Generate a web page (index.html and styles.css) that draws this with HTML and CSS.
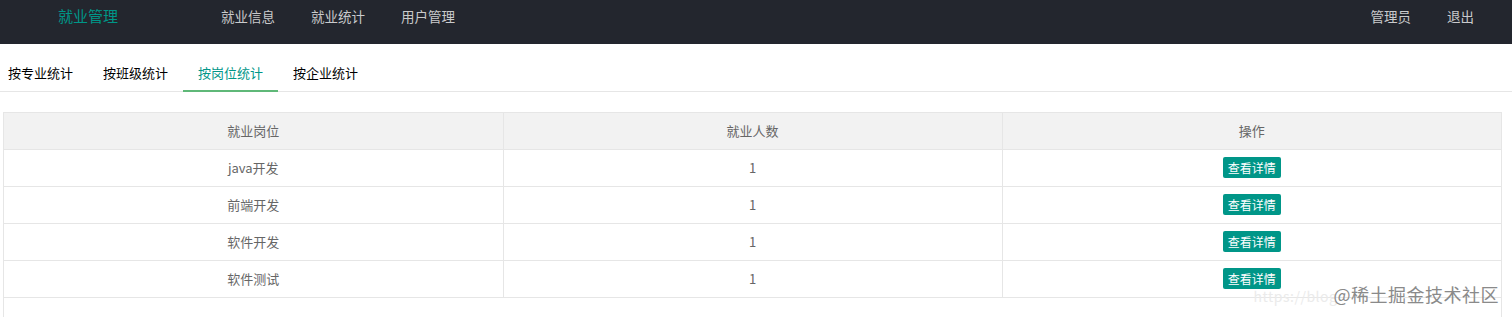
FILE: index.html
```html
<!DOCTYPE html>
<html>
<head>
<meta charset="utf-8">
<title>就业管理</title>
<link rel="stylesheet" href="styles.css">
</head>
<body>
<div class="header">
  <div class="logo">就业管理</div>
  <ul class="nav">
    <li>就业信息</li>
    <li>就业统计</li>
    <li>用户管理</li>
  </ul>
  <ul class="nav nav-right">
    <li>管理员</li>
    <li>退出</li>
  </ul>
</div>

<ul class="tab-title">
  <li>按专业统计</li>
  <li>按班级统计</li>
  <li class="this">按岗位统计</li>
  <li>按企业统计</li>
</ul>

<div class="tbl">
  <table>
    <tr><th>就业岗位</th><th>就业人数</th><th>操作</th></tr>
    <tr><td>java开发</td><td>1</td><td><span class="btn">查看详情</span></td></tr>
    <tr><td>前端开发</td><td>1</td><td><span class="btn">查看详情</span></td></tr>
    <tr><td>软件开发</td><td>1</td><td><span class="btn">查看详情</span></td></tr>
    <tr><td>软件测试</td><td>1</td><td><span class="btn">查看详情</span></td></tr>
  </table>
  <div class="mark"><span class="url">https://blog</span>@稀土掘金技术社区</div>
</div>
</body>
</html>
```
FILE: styles.css
```css
*{ padding:0; margin:0; list-style:none; border:0; box-sizing:border-box;}
body{ font-family:"Noto Sans CJK SC", "Noto Sans", sans-serif; font-size:13px; color:#333; background:#fff; overflow:hidden;}

.header{ height:44px; background:#23262e; display:flex; align-items:flex-start;}
.header .logo{ color:#009688; font-size:15px; line-height:32px; margin-left:58px; width:145px;}
.header .nav{ display:flex;}
.header .nav li{ color:#c9cacc; font-size:13.5px; line-height:32px; padding:0 18px; cursor:pointer;}
.header .nav-right{ margin-left:auto; margin-right:20px;}
.header .nav-right li{ padding:0 18px;}

.tab-title{ display:flex; margin-top:8px; height:40px; border-bottom:1px solid #e6e6e6;}
.tab-title li{ width:95px; text-align:center; line-height:41px; font-size:13px; color:#000; position:relative; cursor:pointer;}
.tab-title li:first-child{ width:88px; text-align:left; padding-left:8px;}
.tab-title .this{ color:#009688;}
.tab-title .this:after{ content:""; position:absolute; left:0; right:0; bottom:-1px; height:2px; background:#5fb878;}

.tbl{ margin:20px 10px 0 3px; height:205px; border:1px solid #e6e6e6; border-bottom:0; position:relative;}
.tbl table{ width:100%; border-collapse:collapse; table-layout:fixed;}
.tbl th, .tbl td{ height:37px; text-align:center; font-weight:normal; color:#666; font-size:13px; border-right:1px solid #e6e6e6; border-bottom:1px solid #e6e6e6;}
.tbl th:last-child, .tbl td:last-child{ border-right:0;}
.tbl th{ height:36px; background:#f2f2f2;}
.tbl .btn{ display:inline-block; height:21px; line-height:21px; padding:0 5px; background:#009688; color:#fff; font-size:12px; border-radius:2px;}

.mark{ position:absolute; right:2px; top:168px; font-size:18px; color:#8a8a8a; letter-spacing:0.5px; white-space:nowrap;}
.mark .url{ color:#ebebeb; font-size:14px; margin-right:-4px;}
```
